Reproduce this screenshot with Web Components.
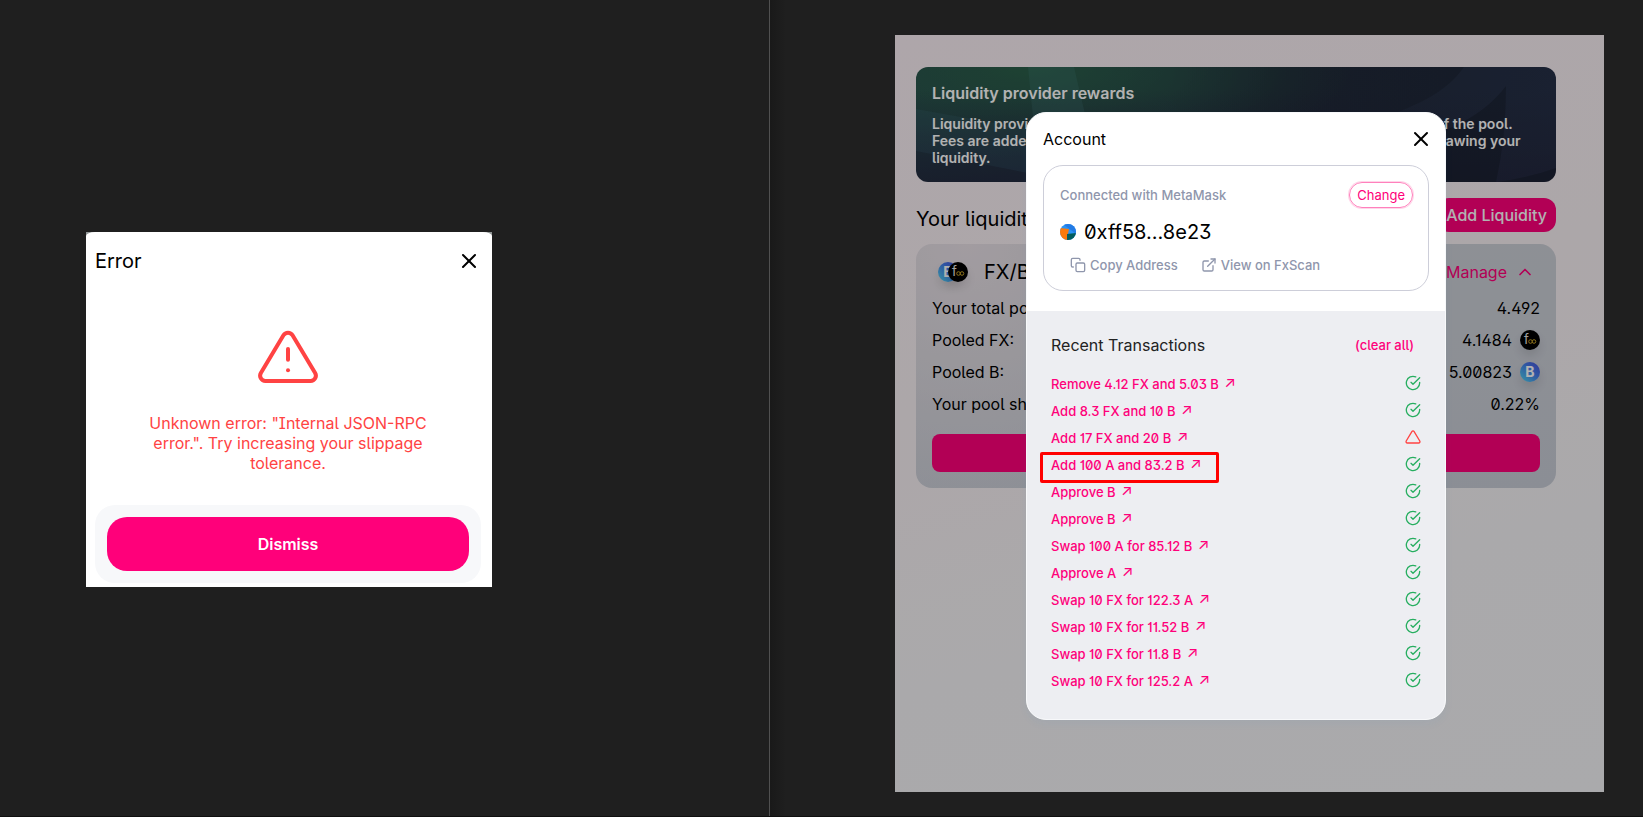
<!DOCTYPE html>
<html lang="en">
<head>
<meta charset="utf-8">
<meta name="viewport" content="width=device-width, initial-scale=1">
<title>Error and recent transactions</title>
<style>
  :root {
    --pink: #ff007a;
    --red: #ff4343;
    --green: #27ae60;
    --muted: #8f96ac;
    --ink: #000;
  }
  body {
    margin: 0;
    background: #1f1f1f;
    color: var(--ink);
    font: 400 16px/20px Inter, "Liberation Sans", sans-serif;
    font-feature-settings: "ss01", "ss02", "cv01", "cv03";
  }
</style>
</head>
<body>
<split-view>
  <error-dialog slot="left" heading="Error" action="Dismiss">Unknown error: "Internal JSON-RPC error.". Try increasing your slippage tolerance.</error-dialog>
  <pool-page slot="right">
    <reward-banner heading="Liquidity provider rewards">Liquidity providers earn a 0.1% fee on all trades proportional to their share of the pool. Fees are added to the pool, accrue in real time and can be claimed by withdrawing your liquidity.</reward-banner>
    <pool-heading></pool-heading>
    <pool-card pair="FX/B"></pool-card>
    <account-modal slot="overlay">
      <tx-row>Remove 4.12 FX and 5.03 B</tx-row>
      <tx-row>Add 8.3 FX and 10 B</tx-row>
      <tx-row failed>Add 17 FX and 20 B</tx-row>
      <tx-row marked>Add 100 A and 83.2 B</tx-row>
      <tx-row>Approve B</tx-row>
      <tx-row>Approve B</tx-row>
      <tx-row>Swap 100 A for 85.12 B</tx-row>
      <tx-row>Approve A</tx-row>
      <tx-row>Swap 10 FX for 122.3 A</tx-row>
      <tx-row>Swap 10 FX for 11.52 B</tx-row>
      <tx-row>Swap 10 FX for 11.8 B</tx-row>
      <tx-row>Swap 10 FX for 125.2 A</tx-row>
    </account-modal>
  </pool-page>
</split-view>

<script>
// Shared by every element: box sizing plus bare buttons and links
const reset = `
  *, :host { box-sizing: border-box; }
  button {
    margin: 0;
    padding: 0;
    border: 0;
    background: none;
    color: inherit;
    font: inherit;
    font-feature-settings: inherit;
    cursor: pointer;
  }
  a { color: inherit; text-decoration: none; }
  h2, h3, p, dl, dd { margin: 0; font: inherit; }
  svg { display: block; flex: none; }
`;

class BaseElement extends HTMLElement {
  constructor() {
    super();
    this.attachShadow({ mode: "open" });
  }

  connectedCallback() {
    this.shadowRoot.innerHTML = `<style>${reset}${this.styles()}</style>${this.render()}`;
  }

  styles() {
    return "";
  }

  render() {
    return "<slot></slot>";
  }
}

const icons = {
  close: `<line x1="18" y1="6" x2="6" y2="18"/><line x1="6" y1="6" x2="18" y2="18"/>`,
  alert: `<path d="M10.29 3.86L1.82 18a2 2 0 0 0 1.71 3h16.94a2 2 0 0 0 1.71-3L13.71 3.86a2 2 0 0 0-3.42 0z"/><line x1="12" y1="9" x2="12" y2="13"/><line x1="12" y1="17" x2="12.01" y2="17"/>`,
  triangle: `<path d="M10.29 3.86L1.82 18a2 2 0 0 0 1.71 3h16.94a2 2 0 0 0 1.71-3L13.71 3.86a2 2 0 0 0-3.42 0z"/>`,
  check: `<path d="M22 11.08V12a10 10 0 1 1-5.93-9.14"/><polyline points="22 4 12 14.01 9 11.01"/>`,
  copy: `<rect x="9" y="9" width="13" height="13" rx="2"/><path d="M5 15H4a2 2 0 0 1-2-2V4a2 2 0 0 1 2-2h9a2 2 0 0 1 2 2v1"/>`,
  external: `<path d="M18 13v6a2 2 0 0 1-2 2H5a2 2 0 0 1-2-2V8a2 2 0 0 1 2-2h6"/><polyline points="15 3 21 3 21 9"/><line x1="10" y1="14" x2="21" y2="3"/>`,
  up: `<polyline points="18 15 12 9 6 15"/>`,
};

class LineIcon extends BaseElement {
  styles() {
    return `:host { display: block; flex: none; }`;
  }

  render() {
    const size = this.getAttribute("size") || 24;
    const weight = this.getAttribute("weight") || 2;
    return `
      <svg width="${size}" height="${size}" viewBox="0 0 24 24" fill="none" stroke="currentColor"
        stroke-width="${weight}" stroke-linecap="round" stroke-linejoin="round" aria-hidden="true">
        ${icons[this.getAttribute("name")]}
      </svg>
    `;
  }
}

class TokenLogo extends BaseElement {
  styles() {
    return `
      :host { display: block; flex: none; border-radius: 50%; box-shadow: 0 6px 10px rgba(0, 0, 0, .1); }
      text { font-family: Inter, sans-serif; }
    `;
  }

  render() {
    if (this.getAttribute("token") === "fx") {
      return `
        <svg width="20" height="20" viewBox="0 0 20 20" aria-hidden="true">
          <circle cx="10" cy="10" r="10" fill="#000"/>
          <text x="4" y="14" font-size="13" fill="#e8e8e8">f</text>
          <g fill="none" stroke="#c9a227" stroke-width="1">
            <circle cx="10.5" cy="11.5" r="1.8"/><circle cx="14" cy="11.5" r="1.8"/>
          </g>
        </svg>
      `;
    }
    return `
      <svg width="20" height="20" viewBox="0 0 20 20" aria-hidden="true">
        <defs>
          <linearGradient id="g" x1="0" y1="1" x2="1" y2="0">
            <stop offset="0" stop-color="#4fd8ee"/><stop offset=".6" stop-color="#4478e8"/><stop offset="1" stop-color="#4a50d8"/>
          </linearGradient>
        </defs>
        <circle cx="10" cy="10" r="10" fill="url(#g)"/>
        <text x="10" y="15" text-anchor="middle" font-size="14" font-weight="700" fill="#fff">B</text>
      </svg>
    `;
  }
}

class SplitView extends BaseElement {
  styles() {
    return `
      :host {
        display: grid;
        grid-template-columns: 769fr 874fr;
        min-height: 100vh;
        border-bottom: 1px solid #0f0f0f;
      }
      .left { display: flex; align-items: center; padding: 2px 86px 0; }
      .right {
        display: grid;
        padding: 35px 39px 24px 125px;
        border-left: 1px solid #505050;
        background: linear-gradient(90deg, #191919, #1f1f1f 16px);
      }
    `;
  }

  render() {
    return `
      <div class="left"><slot name="left"></slot></div>
      <div class="right"><slot name="right"></slot></div>
    `;
  }
}

class ErrorDialog extends BaseElement {
  styles() {
    return `
      :host { display: block; flex: 0 1 406px; background: #8f9494; }
      section {
        padding: 16px 11px 4px 9px;
        border-radius: 9px 9px 0 0 / 4px 4px 0 0;
        background: #fff;
      }
      header { display: flex; justify-content: space-between; align-items: center; }
      h2 { font-size: 20px; line-height: 26px; }
      .message {
        display: grid;
        justify-items: center;
        gap: 24px;
        padding: 51px 48px 32px;
        color: var(--red);
        text-align: center;
      }
      .message p { max-width: 290px; }
      footer { padding: 12px; border-radius: 20px; background: #f7f8fa; }
      footer button {
        width: 100%;
        height: 54px;
        border-radius: 20px;
        background: var(--pink);
        color: #fff;
        font-weight: 600;
      }
    `;
  }

  render() {
    return `
      <section>
        <header>
          <h2>${this.getAttribute("heading")}</h2>
          <button aria-label="Close"><line-icon name="close"></line-icon></button>
        </header>
        <div class="message">
          <line-icon name="alert" size="64" weight="1.5"></line-icon>
          <p><slot></slot></p>
        </div>
        <footer><button>${this.getAttribute("action")}</button></footer>
      </section>
    `;
  }
}

class PoolPage extends BaseElement {
  styles() {
    return `
      :host {
        position: relative;
        display: block;
        background: linear-gradient(165deg, #f9eef4, #f7eff3 40%, #f4f3f5 70%, #f4f4f6);
      }
      .content { display: grid; padding: 32px 48px 32px 21px; }
      .shade {
        position: absolute;
        inset: 0;
        padding: 77px 48px 32px 21px;
        background: rgba(0, 0, 0, .3);
      }
    `;
  }

  render() {
    return `
      <div class="content"><slot></slot></div>
      <div class="shade"><slot name="overlay"></slot></div>
    `;
  }
}

class RewardBanner extends BaseElement {
  styles() {
    return `
      :host {
        position: relative;
        isolation: isolate;
        display: block;
        overflow: hidden;
        padding: 16px;
        border-radius: 12px;
        background:
          linear-gradient(transparent 20%, rgba(34, 38, 60, .8)),
          radial-gradient(ellipse 50% 90% at 18% 0, #2b5f4a, transparent),
          linear-gradient(100deg, #28484f, #222c3c 55%, #263048);
        color: #fff;
        font-weight: 600;
      }
      .art { position: absolute; inset: 0; z-index: -1; width: 100%; height: 100%; }
      h3 { margin-bottom: 12px; }
      p { font-size: 14px; line-height: 17px; }
    `;
  }

  render() {
    return `
      <svg class="art" viewBox="0 0 640 115" preserveAspectRatio="none" aria-hidden="true">
        <defs>
          <linearGradient id="fade">
            <stop offset="0" stop-color="#121820" stop-opacity="0"/><stop offset="1" stop-color="#121820" stop-opacity=".3"/>
          </linearGradient>
        </defs>
        <path d="M112 0h46l14 60h-54z" fill="#62b0b8" opacity=".12"/>
        <path d="M0 42L112 62v44L0 84z" fill="#5a9fbd" opacity=".1"/>
        <path d="M548 0C530 26 500 40 450 56H250V0z" fill="url(#fade)"/>
        <path d="M590 19C570 45 540 66 470 80v35h110q10-45 10-96z" fill="#121820" opacity=".35"/>
        <path d="M582 115q30-4 58-14v14z" fill="#121820" opacity=".35"/>
      </svg>
      <h3>${this.getAttribute("heading")}</h3>
      <p><slot></slot></p>
    `;
  }
}

class PoolHeading extends BaseElement {
  styles() {
    return `
      :host { display: flex; justify-content: space-between; align-items: center; padding: 16px 0 12px; }
      h2 { padding-top: 8px; font-size: 20px; line-height: 24px; }
      button {
        height: 34px;
        padding: 0 9px;
        border-radius: 12px;
        background: var(--pink);
        color: #fff;
        font-weight: 500;
      }
    `;
  }

  render() {
    return `<h2>Your liquidity</h2><button>Add Liquidity</button>`;
  }
}

class PoolCard extends BaseElement {
  styles() {
    return `
      :host {
        display: grid;
        gap: 12px;
        padding: 14px 16px 16px;
        border-radius: 16px;
        background:
          radial-gradient(ellipse 45% 110% at 8% 0, #e8e0e6, transparent),
          linear-gradient(170deg, #cdd0d6, #c8ccd6);
      }
      header, dl > div, .pair, dd, .manage { display: flex; align-items: center; }
      header, dl > div { justify-content: space-between; }
      header { height: 28px; padding: 0 5px 0 6px; }
      .pair { font-size: 20px; }
      .pair token-logo:last-of-type { margin: 0 16px 0 -10px; }
      .manage { gap: 8px; color: var(--pink); }
      dl { display: grid; gap: 12px; }
      dd { gap: 8px; }
      .remove { height: 38px; margin-top: 8px; border-radius: 8px; background: var(--pink); }
    `;
  }

  render() {
    return `
      <header>
        <span class="pair"><token-logo token="b"></token-logo><token-logo token="fx"></token-logo>${this.getAttribute("pair")}</span>
        <button class="manage">Manage <line-icon name="up" size="20"></line-icon></button>
      </header>
      <dl>
        <div><dt>Your total pool tokens:</dt><dd>4.492</dd></div>
        <div><dt>Pooled FX:</dt><dd>4.1484 <token-logo token="fx"></token-logo></dd></div>
        <div><dt>Pooled B:</dt><dd>5.00823 <token-logo token="b"></token-logo></dd></div>
        <div><dt>Your pool share:</dt><dd>0.22%</dd></div>
      </dl>
      <button class="remove" aria-label="Remove liquidity"></button>
    `;
  }
}

class AccountModal extends BaseElement {
  styles() {
    return `
      :host {
        display: block;
        max-width: 420px;
        margin: 0 auto;
        overflow: hidden;
        border: 1px solid #f7f8fa;
        border-radius: 20px;
        background: #fff;
        box-shadow: 0 4px 8px rgba(47, 128, 237, .05);
      }
      header, .top, .actions, .name, .recent, .actions a, .actions button { display: flex; align-items: center; }
      header, .top, .recent { justify-content: space-between; }
      header { padding: 14px 12px 14px 16px; }
      .card {
        margin: 0 16px 20px;
        padding: 16px 15px 15px 16px;
        border: 1px solid #cdced9;
        border-radius: 20px;
      }
      .top, .actions { color: var(--muted); font-size: 13px; font-weight: 500; }
      .change {
        height: 26px;
        padding: 0 7px;
        border: 1px solid #ff80bc;
        border-radius: 13px;
        box-shadow: 0 0 0 1px #ffd6e9;
        color: var(--pink);
        font-weight: 400;
      }
      .name { gap: 8px; margin: 12px 0 11px; font-size: 20px; line-height: 24px; }
      .actions { gap: 23px; padding-left: 10px; }
      .actions a, .actions button { gap: 4px; }
      .list { padding: 24px; background: #edeef2; }
      .recent { margin-bottom: 16px; color: #222; }
      .recent button { padding-right: 7px; color: var(--pink); font-size: 13px; font-weight: 500; }
    `;
  }

  render() {
    return `
      <header>
        <span>Account</span>
        <button aria-label="Close"><line-icon name="close"></line-icon></button>
      </header>
      <div class="card">
        <div class="top">
          <span>Connected with MetaMask</span>
          <button class="change">Change</button>
        </div>
        <div class="name">
          <svg width="16" height="16" viewBox="0 0 16 16" aria-hidden="true">
            <defs><clipPath id="c"><circle cx="8" cy="8" r="8"/></clipPath></defs>
            <g clip-path="url(#c)">
              <rect width="16" height="16" fill="#2a93f5"/>
              <path d="M3 0L16 10V0z" fill="#237be5"/>
              <path d="M0 4l9 1-1 5-1 6H0z" fill="#fa7a0c"/>
              <path d="M7 10l9-1v7H7z" fill="#035d5e"/>
            </g>
          </svg>
          <span>0xff58...8e23</span>
        </div>
        <div class="actions">
          <button><line-icon name="copy" size="16"></line-icon>Copy Address</button>
          <a href="#"><line-icon name="external" size="16"></line-icon>View on FxScan</a>
        </div>
      </div>
      <div class="list">
        <div class="recent"><h3>Recent Transactions</h3><button>(clear all)</button></div>
        <slot></slot>
      </div>
    `;
  }
}

class TxRow extends BaseElement {
  styles() {
    return `
      :host {
        position: relative;
        display: flex;
        justify-content: space-between;
        align-items: center;
        height: 27px;
        font-size: 13px;
        font-weight: 500;
      }
      a { padding-bottom: 2px; color: var(--pink); }
      .arrow { margin-left: 2px; font-size: 15px; font-weight: 400; line-height: 1; vertical-align: 1px; }
      line-icon { padding-bottom: 4px; color: var(--green); }
      :host([failed]) line-icon { color: var(--red); }
      /* red frame drawn around the marked transaction */
      .mark {
        position: absolute;
        inset: 0 auto auto -11px;
        width: 179px;
        height: 31px;
        border: 3px solid #f00;
        border-radius: 2px;
        pointer-events: none;
      }
    `;
  }

  render() {
    return `
      <a href="#"><slot></slot> <span class="arrow">↗</span></a>
      <line-icon name="${this.hasAttribute("failed") ? "triangle" : "check"}" size="16"></line-icon>
      ${this.hasAttribute("marked") ? `<span class="mark"></span>` : ""}
    `;
  }
}

customElements.define("line-icon", LineIcon);
customElements.define("token-logo", TokenLogo);
customElements.define("split-view", SplitView);
customElements.define("error-dialog", ErrorDialog);
customElements.define("pool-page", PoolPage);
customElements.define("reward-banner", RewardBanner);
customElements.define("pool-heading", PoolHeading);
customElements.define("pool-card", PoolCard);
customElements.define("account-modal", AccountModal);
customElements.define("tx-row", TxRow);
</script>
</body>
</html>
